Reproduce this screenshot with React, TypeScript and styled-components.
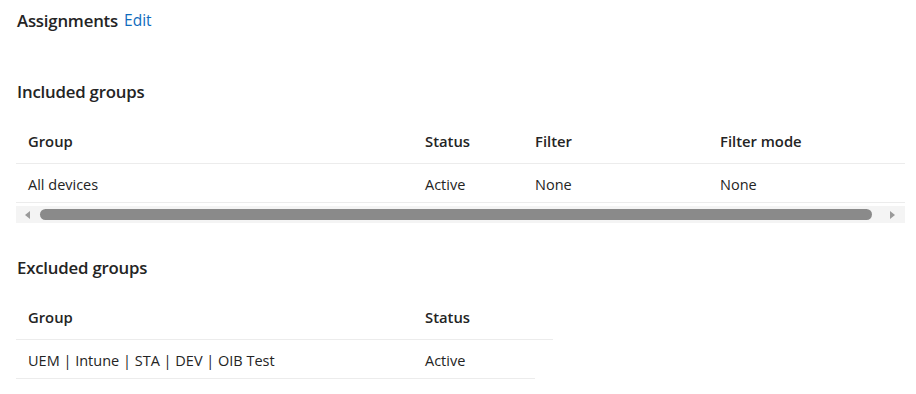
import React from 'react';
import styled, { createGlobalStyle } from 'styled-components';

const GlobalStyle = createGlobalStyle`
  body {
    margin: 0;
    background: #ffffff;
    font-family: 'Segoe UI', 'Open Sans', 'Noto Sans', sans-serif;
    color: #242424;
  }
`;

const Page = styled.div`
  width: 916px;
  height: 394px;
  padding: 0 11px 0 16px;
  box-sizing: border-box;
  display: flex;
  flex-direction: column;
`;

const TitleRow = styled.div`
  height: 40px;
  display: flex;
  align-items: center;
  gap: 6px;
  padding-left: 1px;
`;

const Title = styled.h2`
  margin: 0;
  font-size: 16.8px;
  font-weight: 600;
  letter-spacing: -0.2px;
`;

const EditLink = styled.a`
  font-size: 15.5px;
  color: #0f6cbd;
  cursor: pointer;
`;

interface ISectionTitleProps {
  $top: number;
}

const SectionTitle = styled.h3<ISectionTitleProps>`
  margin: ${(props: ISectionTitleProps): string => `${props.$top}px 0 0 1px`};
  height: 24px;
  line-height: 24px;
  font-size: 16.8px;
  font-weight: 600;
  letter-spacing: -0.2px;
`;

const Table = styled.div`
  margin-top: 18px;
  display: flex;
  flex-direction: column;
  font-size: 14.5px;
`;

interface IRowProps {
  $columns: string;
  $isHeader?: boolean;
  $width?: number;
}

const Row = styled.div<IRowProps>`
  display: grid;
  grid-template-columns: ${(props: IRowProps): string => props.$columns};
  align-items: center;
  height: ${(props: IRowProps): string => (props.$isHeader ? '42px' : '39px')};
  padding: ${(props: IRowProps): string => (props.$isHeader ? '0 0 3px' : '3px 0 0')};
  width: ${(props: IRowProps): string => (props.$width ? `${props.$width}px` : '100%')};
  border-bottom: 1px solid #ececec;
  box-sizing: border-box;
  font-size: ${(props: IRowProps): string => (props.$isHeader ? '14.8px' : '14.5px')};
  font-weight: ${(props: IRowProps): string => (props.$isHeader ? '600' : '400')};
`;

const Cell = styled.div`
  padding: 0 12px;
  white-space: nowrap;
`;

const ScrollTrack = styled.div`
  margin-top: 3px;
  height: 17px;
  background: #f4f4f4;
  display: flex;
  align-items: center;
  padding: 0 10px 0 9px;
`;

interface IArrowProps {
  $direction: 'left' | 'right';
}

const Arrow = styled.span<IArrowProps>`
  width: 0;
  height: 0;
  border-top: 4px solid transparent;
  border-bottom: 4px solid transparent;
  ${(props: IArrowProps): string => (props.$direction === 'left' ? 'border-right: 5px solid #9a9a9a;' : 'border-left: 5px solid #9a9a9a;')}
`;

const Thumb = styled.div`
  flex: 1;
  height: 11px;
  margin: 0 18px 0 10px;
  border-radius: 6px;
  background: #8a8a8a;
`;

const includedColumns = '397px 110px 185px 1fr';
const excludedColumns = '397px 1fr';

export default function App(): React.ReactElement {
  return (
    <React.Fragment>
      <GlobalStyle />
      <Page>
        <TitleRow>
          <Title>Assignments</Title>
          <EditLink>Edit</EditLink>
        </TitleRow>

        <SectionTitle $top={40}>Included groups</SectionTitle>
        <Table>
          <Row $columns={includedColumns} $isHeader>
            <Cell>Group</Cell>
            <Cell>Status</Cell>
            <Cell>Filter</Cell>
            <Cell>Filter mode</Cell>
          </Row>
          <Row $columns={includedColumns}>
            <Cell>All devices</Cell>
            <Cell>Active</Cell>
            <Cell>None</Cell>
            <Cell>None</Cell>
          </Row>
          <ScrollTrack>
            <Arrow $direction='left' />
            <Thumb />
            <Arrow $direction='right' />
          </ScrollTrack>
        </Table>

        <SectionTitle $top={33}>Excluded groups</SectionTitle>
        <Table>
          <Row $columns={excludedColumns} $isHeader $width={537}>
            <Cell>Group</Cell>
            <Cell>Status</Cell>
          </Row>
          <Row $columns={excludedColumns} $width={519}>
            <Cell>UEM | Intune | STA | DEV | OIB Test</Cell>
            <Cell>Active</Cell>
          </Row>
        </Table>
      </Page>
    </React.Fragment>
  );
}
